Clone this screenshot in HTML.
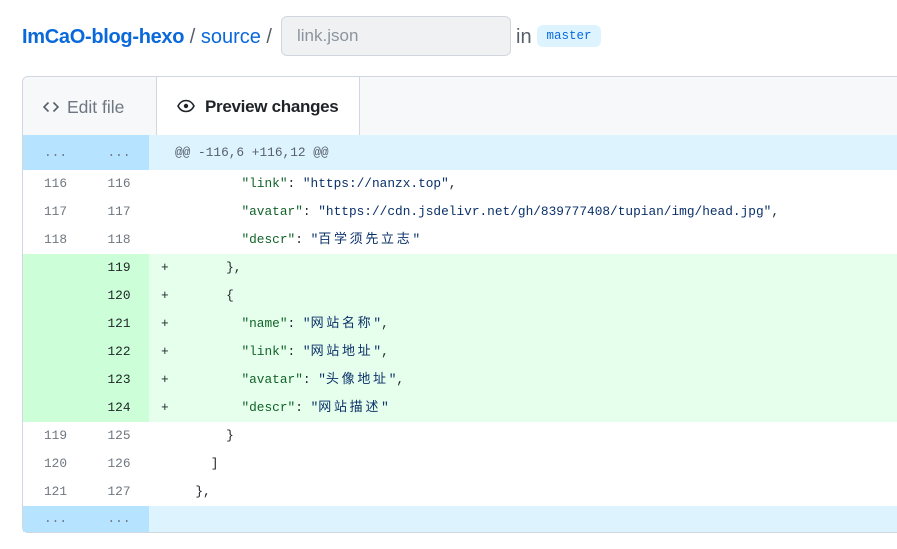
<!DOCTYPE html>
<html><head><meta charset="utf-8"><style>
*{margin:0;padding:0;box-sizing:border-box}
body{width:897px;height:549px;background:#fff;position:relative;overflow:hidden;font-family:"Liberation Sans","Noto Sans CJK SC",sans-serif;color:#1f2328}
.a{position:absolute}
.mono{font-family:"Liberation Mono","Noto Sans CJK SC",monospace;font-size:12.8px}
.row{position:absolute;left:23px;width:880px;height:28px;line-height:28px}
.n1,.n2{position:absolute;top:0;width:63px;height:100%;text-align:right;padding-right:12px;color:#6e7781}
.n1{left:0;text-align:center;padding:0 0 0 2px}
.n2{left:63px;text-align:center;padding:0 0 0 3px}
.code{position:absolute;left:157px;top:0;white-space:pre}
.add{background:#e6ffec}
.add .n1,.add .n2{background:#ccffd8;color:#1f2328}
.pl{position:absolute;left:138px;top:0}
.k{color:#116329}.s{color:#0a3069}
.c{letter-spacing:2.7px;font-size:13px}
</style></head><body>
<div class="a" style="left:22px;top:25px;font-size:20px;line-height:24px;white-space:nowrap">
<span style="color:#0969da;font-weight:bold;letter-spacing:-0.3px">ImCaO-blog-hexo</span><span style="color:#57606a"> / </span><span style="color:#0969da">source</span><span style="color:#57606a"> /</span></div>
<div class="a" style="left:281px;top:16px;width:230px;height:40px;background:#eff1f3;border:1px solid #d0d7de;border-radius:6px;font-size:17px;color:#8c959f;line-height:38px;padding-left:15px">link.json</div>
<div class="a" style="left:516px;top:25px;font-size:20px;line-height:24px;color:#57606a">in</div>
<div class="a mono" style="left:537px;top:25px;width:64px;height:22px;background:#ddf4ff;color:#0969da;border-radius:6px;line-height:22px;text-align:center;font-size:12.5px">master</div>

<div class="a" style="left:22px;top:76px;width:900px;height:457px;border:1px solid #d0d7de;border-radius:6px;overflow:hidden">
 <div class="a" style="left:0;top:0;width:900px;height:59px;background:#f6f8fa;border-bottom:1px solid #d0d7de"></div>
 <div class="a" style="left:20px;top:19px;font-size:17.5px;color:#6e7781;line-height:22px"><svg width="16" height="16" viewBox="0 0 16 16" style="vertical-align:-2px;margin-right:8px"><path d="M5.5 3.5L1 8l4.5 4.5M10.5 3.5L15 8l-4.5 4.5" fill="none" stroke="#57606a" stroke-width="1.6"/></svg>Edit file</div>
 <div class="a" style="left:133px;top:-1px;width:204px;height:60px;background:#fff;border-left:1px solid #d0d7de;border-right:1px solid #d0d7de"></div>
 <div class="a" style="left:154px;top:19px;font-size:17px;color:#1f2328;line-height:22px;font-weight:bold;letter-spacing:-0.3px"><svg width="18" height="16" viewBox="0 0 18 16" style="vertical-align:-2px;margin-right:10px"><path d="M1 8C3 4 6 2.5 9 2.5S15 4 17 8c-2 4-5 5.5-8 5.5S3 12 1 8z" fill="none" stroke="#1f2328" stroke-width="1.6"/><circle cx="9" cy="8" r="2.2" fill="#1f2328"/></svg>Preview changes</div>
</div>

<div class="mono">
<div class="row" style="top:135px;height:35px;line-height:35px;background:#ddf4ff"><span class="n1" style="background:#b6e3ff">...</span><span class="n2" style="background:#b6e3ff">...</span><span class="code" style="left:152px;color:#57606a">@@ -116,6 +116,12 @@</span></div>
<div class="row" style="top:170px"><span class="n1">116</span><span class="n2">116</span><span class="code">        <span class="k">"link"</span>: <span class="s">"https://nanzx.top"</span>,</span></div>
<div class="row" style="top:198px"><span class="n1">117</span><span class="n2">117</span><span class="code">        <span class="k">"avatar"</span>: <span class="s">"https://cdn.jsdelivr.net/gh/839777408/tupian/img/head.jpg"</span>,</span></div>
<div class="row" style="top:226px"><span class="n1">118</span><span class="n2">118</span><span class="code">        <span class="k">"descr"</span>: <span class="s">"<span class="c">百学须先立志</span>"</span></span></div>
<div class="row add" style="top:254px"><span class="n1"></span><span class="n2">119</span><span class="pl">+</span><span class="code">      },</span></div>
<div class="row add" style="top:282px"><span class="n1"></span><span class="n2">120</span><span class="pl">+</span><span class="code">      {</span></div>
<div class="row add" style="top:310px"><span class="n1"></span><span class="n2">121</span><span class="pl">+</span><span class="code">        <span class="k">"name"</span>: <span class="s">"<span class="c">网站名称</span>"</span>,</span></div>
<div class="row add" style="top:338px"><span class="n1"></span><span class="n2">122</span><span class="pl">+</span><span class="code">        <span class="k">"link"</span>: <span class="s">"<span class="c">网站地址</span>"</span>,</span></div>
<div class="row add" style="top:366px"><span class="n1"></span><span class="n2">123</span><span class="pl">+</span><span class="code">        <span class="k">"avatar"</span>: <span class="s">"<span class="c">头像地址</span>"</span>,</span></div>
<div class="row add" style="top:394px"><span class="n1"></span><span class="n2">124</span><span class="pl">+</span><span class="code">        <span class="k">"descr"</span>: <span class="s">"<span class="c">网站描述</span>"</span></span></div>
<div class="row" style="top:422px"><span class="n1">119</span><span class="n2">125</span><span class="code">      }</span></div>
<div class="row" style="top:450px"><span class="n1">120</span><span class="n2">126</span><span class="code">    ]</span></div>
<div class="row" style="top:478px"><span class="n1">121</span><span class="n2">127</span><span class="code">  },</span></div>
<div class="row" style="top:506px;height:26px;line-height:26px;background:#ddf4ff"><span class="n1" style="background:#b6e3ff">...</span><span class="n2" style="background:#b6e3ff">...</span></div>
</div>
</body></html>
